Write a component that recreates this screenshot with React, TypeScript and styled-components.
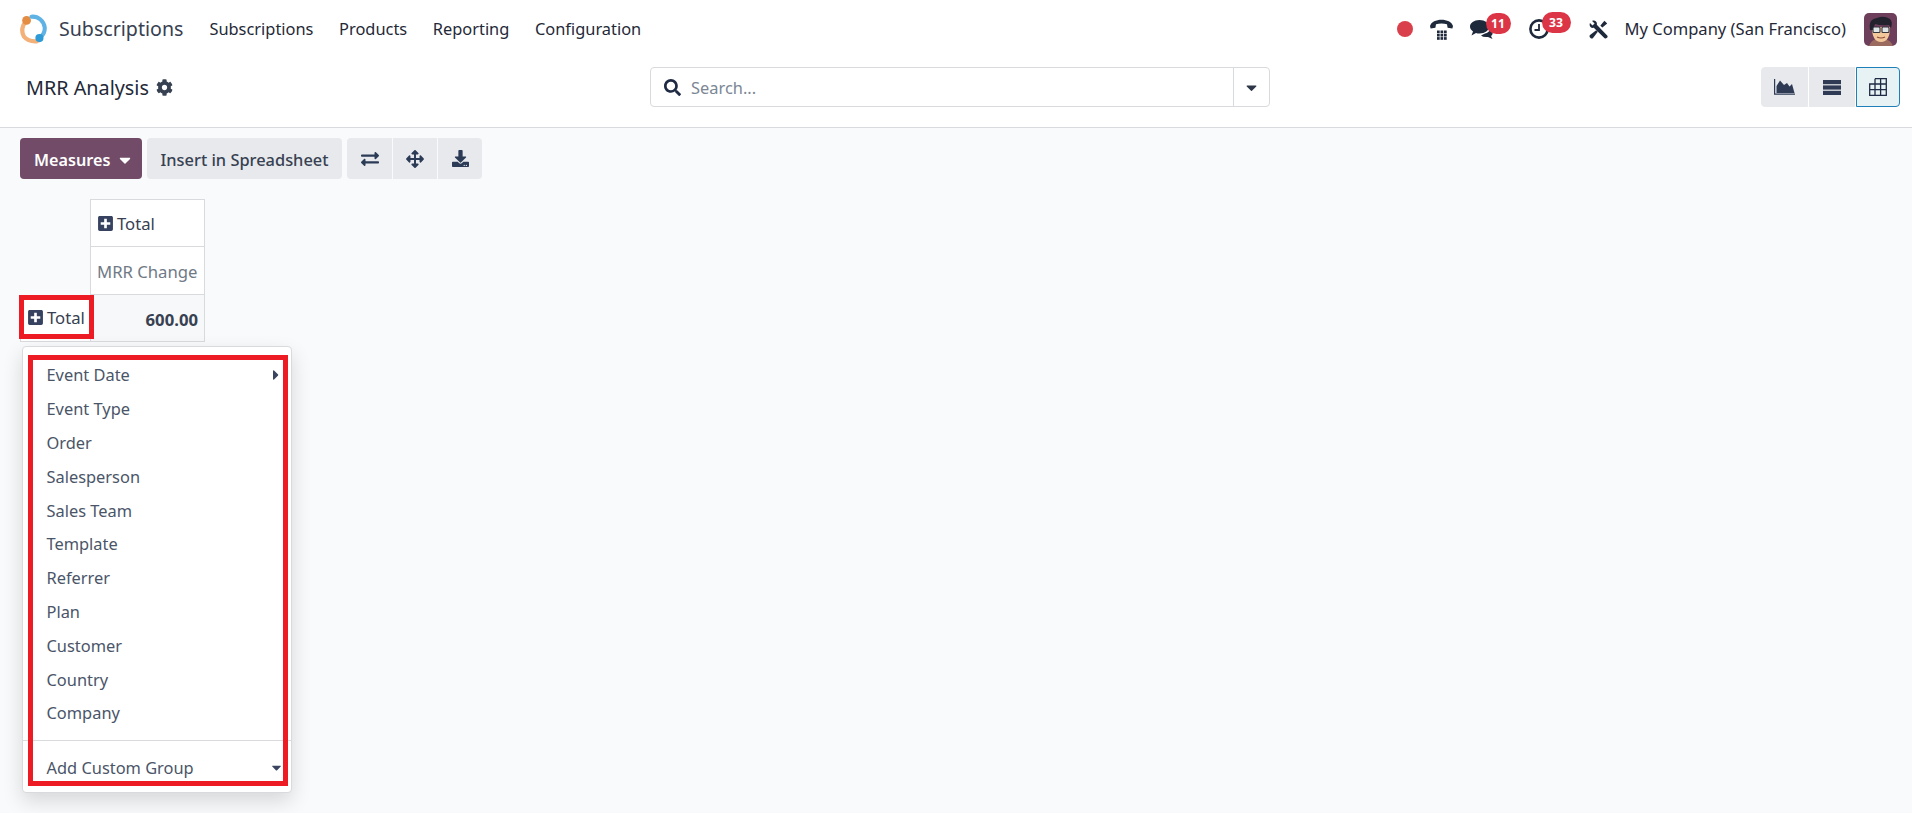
import React from "react";
import styled, { createGlobalStyle } from "styled-components";
import {
  FaCog, FaSearch, FaCaretDown, FaCaretRight, FaExchangeAlt, FaArrowsAlt, FaDownload,
  FaPlusSquare,
} from "react-icons/fa";

const Global = createGlobalStyle`
  html, body { margin: 0; padding: 0; background: #f9fafb; }
  body { font-family: "Noto Sans", "Open Sans", sans-serif; color: #374151; font-size: 16.4px; }
  * { box-sizing: border-box; }
`;

const Page = styled.div`
  position: relative;
  height: 813px;
  overflow: hidden;
  background: #f9fafb;
`;

const NavBar = styled.header`
  display: flex;
  align-items: center;
  height: 58px;
  background: #fff;
  padding: 0 15px 0 18px;
`;

const Brand = styled.span`
  font-size: 19.6px;
  color: #374151;
  margin-left: 11px;
  margin-right: 26px;
  padding-bottom: 1px;
`;

const MenuItem = styled.span`
  font-size: 16.4px;
  color: #1f2937;
  margin-right: 25.6px;
  padding-bottom: 2px;
`;

const Systray = styled.div`
  margin-left: auto;
  display: flex;
  align-items: center;
  color: #1e293b;
`;

const TrayIcon = styled.span<{ $w: number; $mr: number }>`
  position: relative;
  display: flex;
  align-items: center;
  justify-content: flex-start;
  width: ${(p) => p.$w}px;
  margin-right: ${(p) => p.$mr}px;
`;

const RecordDot = styled.span`
  display: block;
  width: 16px;
  height: 16px;
  border-radius: 50%;
  background: #d9404c;
`;

const Badge = styled.span<{ $left: number; $w: number }>`
  position: absolute;
  left: ${(p) => p.$left}px;
  top: -7px;
  width: ${(p) => p.$w}px;
  height: 21px;
  border-radius: 11px;
  background: #dc3545;
  color: #fff;
  font-size: 12.2px;
  font-weight: 700;
  line-height: 21px;
  text-align: center;
`;

const CompanyName = styled.span`
  font-size: 16.55px;
  color: #1f2937;
  margin-right: 18px;
  padding-bottom: 2px;
`;

const ControlPanel = styled.section`
  display: grid;
  grid-template-columns: 624px 620px 1fr;
  align-items: center;
  height: 70px;
  padding: 0 12px 11px 26px;
  background: #fff;
  border-bottom: 1px solid #d8dadd;
`;

const Title = styled.div`
  display: flex;
  align-items: center;
  gap: 7px;
  font-size: 19.8px;
  color: #1f2937;
  svg { color: #374151; }
`;

const SearchBox = styled.div`
  display: flex;
  align-items: stretch;
  height: 40px;
  background: #fff;
  border: 1px solid #d8dadd;
  border-radius: 4px;
`;

const SearchField = styled.div`
  flex: 1;
  display: flex;
  align-items: center;
  gap: 10px;
  padding-left: 13px;
  font-size: 16.4px;
  color: #7b8794;
  svg { color: #1f2a44; }
`;

const SearchCaret = styled.div`
  width: 36px;
  display: flex;
  align-items: center;
  justify-content: center;
  border-left: 1px solid #d8dadd;
  color: #2d3748;
`;

const Switcher = styled.div`
  display: flex;
  justify-content: flex-end;
  gap: 1px;
`;

const ViewButton = styled.button<{ $active?: boolean; $w: number; $pos: "first" | "mid" | "last" }>`
  display: flex;
  align-items: center;
  justify-content: center;
  width: ${(p) => p.$w}px;
  height: 40px;
  padding: 0;
  border: 1px solid ${(p) => (p.$active ? "#1f7fb8" : "#e7e9ed")};
  background: ${(p) => (p.$active ? "#e6f2f3" : "#e7e9ed")};
  color: #2f3b55;
  border-radius: ${(p) => (p.$pos === "first" ? "4px 0 0 4px" : p.$pos === "last" ? "0 4px 4px 0" : "0")};
`;

const Content = styled.main`
  padding: 10px 20px 0;
`;

const Toolbar = styled.div`
  display: flex;
  align-items: stretch;
  height: 41px;
`;

const MeasuresButton = styled.button`
  display: flex;
  align-items: center;
  gap: 6px;
  width: 122px;
  padding: 2px 0 0 14px;
  border: 0;
  border-radius: 4px;
  background: #714b67;
  color: #fff;
  font: 600 16.2px "Noto Sans", sans-serif;
  margin-right: 5px;
`;

const GreyButton = styled.button`
  width: 195px;
  border: 0;
  border-radius: 4px;
  background: #e7e9ed;
  color: #374151;
  font: 500 16.4px "Noto Sans", sans-serif;
  padding: 2px 0 0;
  margin-right: 5px;
`;

const IconButton = styled.button<{ $w: number; $pos: "first" | "mid" | "last" }>`
  display: flex;
  align-items: center;
  justify-content: center;
  width: ${(p) => p.$w}px;
  border: 0;
  padding: 0;
  margin-right: ${(p) => (p.$pos === "last" ? 0 : 1)}px;
  background: #e7e9ed;
  color: #2b3a55;
  border-radius: ${(p) => (p.$pos === "first" ? "4px 0 0 4px" : p.$pos === "last" ? "0 4px 4px 0" : "0")};
`;

const Pivot = styled.table`
  border-collapse: collapse;
  margin-top: 20px;
  font-size: 16.7px;
  color: #374151;
`;

const BlankCell = styled.th`
  width: 70px;
  padding: 0;
`;

const HeadCell = styled.th<{ $muted?: boolean; $h: number }>`
  width: 114px;
  height: ${(p) => p.$h}px;
  padding: 2px 6px 0;
  background: #fff;
  border: 1px solid #d8dadd;
  font-weight: 400;
  text-align: left;
  white-space: nowrap;
  color: ${(p) => (p.$muted ? "#6f7a86" : "#374151")};
`;

const ToggleLabel = styled.span`
  display: inline-flex;
  align-items: center;
  gap: 3px;
  svg { color: #374260; }
`;

const RowHead = styled.th`
  position: relative;
  height: 47px;
  padding: 2px 0 0 6px;
  background: #fff;
  border: 1px solid #d8dadd;
  border-top: 0;
  font-weight: 400;
  text-align: left;
`;

const ValueCell = styled.td`
  padding: 2px 6px 0;
  text-align: right;
  font-weight: 700;
  background: #f7f8f9;
  border: 1px solid #d8dadd;
`;

const RedFrame = styled.span<{ $t: number; $r: number; $b: number; $l: number }>`
  position: absolute;
  top: ${(p) => p.$t}px;
  right: ${(p) => p.$r}px;
  bottom: ${(p) => p.$b}px;
  left: ${(p) => p.$l}px;
  border: 5px solid #ed1c24;
  pointer-events: none;
`;

const Menu = styled.div`
  position: absolute;
  left: 22px;
  top: 346px;
  width: 270px;
  height: 447px;
  padding-top: 11px;
  background: #fff;
  border: 1px solid #d8dadd;
  border-radius: 4px;
  box-shadow: 0 8px 20px rgba(0, 0, 0, 0.14);
`;

const MenuRow = styled.div`
  position: relative;
  display: flex;
  align-items: center;
  height: 33.8px;
  padding-left: 23.5px;
  font-size: 16.4px;
  color: #4a5568;
  svg { position: absolute; right: 7px; color: #3a4560; }
`;

const MenuDivider = styled.hr`
  margin: 10px 0;
  border: 0;
  border-top: 1px solid #d8dadd;
`;

const Logo = () => (
  <svg width="30" height="30" viewBox="2 1 27 28" fill="none">
    <path d="M9 8 A11.5 11.5 0 0 0 7 22 Q11 27 19 26.5" stroke="#f3b078" strokeWidth="4" strokeLinecap="round" />
    <circle cx="9.5" cy="7" r="4.1" fill="#e48c42" />
    <path d="M14 3.5 A11.5 11.5 0 0 1 26.5 14 Q26.5 19 23 22" stroke="#5fb2e4" strokeWidth="3.8" strokeLinecap="round" />
    <circle cx="21.5" cy="23.5" r="3.8" fill="#2f9bd6" />
  </svg>
);

const PhoneIcon = () => (
  <svg width="23" height="21" viewBox="0 0 23 21" fill="#1e293b">
    <path d="M0 7 C2 -1.5 21 -1.5 23 7 L22.4 9.4 L17.6 8.8 L17 5.2 C13.5 4.2 9.5 4.2 6 5.2 L5.4 8.8 L.6 9.4 Z" />
    {[7, 10.5, 14].map((x) => [11.5, 14.8, 18.1].map((y) => <rect key={`${x}${y}`} x={x} y={y} width="2.7" height="2.7" />))}
  </svg>
);

const ChatIcon = () => (
  <svg width="23" height="19" viewBox="0 0 23 19" fill="#1e293b">
    <path d="M15 13.5 Q19 12.5 20 9.5 Q23 11 22.6 13.5 Q22.4 15 21 16 L22.5 19 L18 17 Q13 17.5 11 15.5 Z" />
    <path d="M9.5 0 C15 0 19 3 19 6.5 C19 10.5 15 13.5 9.5 13.5 Q7.5 13.5 6 13 L1.5 15.5 L3 11.5 C1 10 0 8.5 0 6.5 C0 3 4 0 9.5 0 Z" />
  </svg>
);

const ClockIcon = () => (
  <svg width="20" height="20" viewBox="0 0 20 20" fill="none" stroke="#1e293b">
    <circle cx="10" cy="10" r="8.6" strokeWidth="2.6" />
    <path d="M10 5 V11 H5.5" strokeWidth="1.8" />
  </svg>
);

const ToolsIcon = () => (
  <svg width="19" height="19" viewBox="0 0 19 19" fill="#1e293b">
    <path d="M1 3 L3.5 5.5 L5.6 3.4 L3.1 .9 C6 -.3 8.6 2 7.8 4.8 L18.2 15.6 Q19 16.4 18.3 17.4 L17.6 18.1 Q16.6 19 15.6 18.2 L4.8 7.8 C2 8.6 -.3 6 1 3 Z" />
    <path d="M12.2 6.4 L11.4 5.6 L15.4 .8 L18.2 3.6 L13.4 7.6 Z" />
    <path d="M7.2 10.2 L8.8 11.8 L4 18 Q3 19 1.8 18.2 L.8 17.2 Q0 16 1 15 Z" />
  </svg>
);

const AreaIcon = () => (
  <svg width="21" height="16" viewBox="0 0 21 16" fill="currentColor">
    <path d="M.6 0 V15.2 H21" fill="none" stroke="currentColor" strokeWidth="1.2" />
    <path d="M2.5 14 V7 L6 1.5 L10 6 L13 4 L15.5 7.5 L18 5 L20.5 14 Z" />
  </svg>
);

const ListIcon = () => (
  <svg width="18" height="15" viewBox="0 0 18 15" fill="currentColor">
    <rect x="0" y="0" width="18" height="4.2" />
    <rect x="0" y="5.4" width="18" height="4.2" />
    <rect x="0" y="10.8" width="18" height="4.2" />
  </svg>
);

const PivotIcon = () => (
  <svg width="18" height="18" viewBox="0 0 18 18" fill="none" stroke="#1f2a44" strokeWidth="1.3">
    <path d="M6 .7 H17.3 V17.3 H.7 V6 H17.3 M.7 11.6 H17.3 M6 .7 V17.3 M11.6 .7 V17.3" />
  </svg>
);

const Avatar = () => (
  <svg width="33" height="33" viewBox="0 0 33 33">
    <rect width="33" height="33" rx="5" fill="#6d3f5b" />
    <path d="M5 33 Q7 27 13 26 L20 26 Q27 27 29 33 Z" fill="#9c6b5f" />
    <path d="M8 14 Q8 29 17 29 Q26 29 26 14 Z" fill="#f2c79a" />
    <path d="M6 17 Q4 6 13 5 Q20 2 26 6 Q29 9 27 15 L25 12 Q17 13 11 11 Q10 14 9 17 Z" fill="#23232d" />
    <rect x="9" y="14" width="7" height="5.5" rx="1" fill="#dfe6e6" stroke="#33333d" strokeWidth="1.1" />
    <rect x="18" y="14" width="7" height="5.5" rx="1" fill="#dfe6e6" stroke="#33333d" strokeWidth="1.1" />
    <path d="M13 24 Q17 26 21 24" stroke="#8a4a3a" strokeWidth="1.2" fill="none" />
  </svg>
);

const groups = ["Event Date", "Event Type", "Order", "Salesperson", "Sales Team", "Template", "Referrer", "Plan", "Customer", "Country", "Company"];

export default function App() {
  return (
    <Page>
      <Global />
      <NavBar>
        <Logo />
        <Brand>Subscriptions</Brand>
        <MenuItem>Subscriptions</MenuItem>
        <MenuItem>Products</MenuItem>
        <MenuItem>Reporting</MenuItem>
        <MenuItem>Configuration</MenuItem>
        <Systray>
          <TrayIcon $w={16} $mr={17}><RecordDot /></TrayIcon>
          <TrayIcon $w={23} $mr={17}><PhoneIcon /></TrayIcon>
          <TrayIcon $w={23} $mr={36}>
            <ChatIcon />
            <Badge $left={16} $w={25}>11</Badge>
          </TrayIcon>
          <TrayIcon $w={20} $mr={40}>
            <ClockIcon />
            <Badge $left={13} $w={29}>33</Badge>
          </TrayIcon>
          <TrayIcon $w={19} $mr={17}><ToolsIcon /></TrayIcon>
          <CompanyName>My Company (San Francisco)</CompanyName>
          <Avatar />
        </Systray>
      </NavBar>
      <ControlPanel>
        <Title>MRR Analysis <FaCog size={17} /></Title>
        <SearchBox>
          <SearchField><FaSearch size={17} />Search...</SearchField>
          <SearchCaret><FaCaretDown size={17} /></SearchCaret>
        </SearchBox>
        <Switcher>
          <ViewButton $w={47} $pos="first"><AreaIcon /></ViewButton>
          <ViewButton $w={46} $pos="mid"><ListIcon /></ViewButton>
          <ViewButton $w={44} $pos="last" $active><PivotIcon /></ViewButton>
        </Switcher>
      </ControlPanel>
      <Content>
        <Toolbar>
          <MeasuresButton>Measures <FaCaretDown size={18} /></MeasuresButton>
          <GreyButton>Insert in Spreadsheet</GreyButton>
          <IconButton $w={45} $pos="first"><FaExchangeAlt size={18} /></IconButton>
          <IconButton $w={44} $pos="mid"><FaArrowsAlt size={18} /></IconButton>
          <IconButton $w={44} $pos="last"><FaDownload size={17} /></IconButton>
        </Toolbar>
        <Pivot>
          <tbody>
            <tr>
              <BlankCell rowSpan={2} />
              <HeadCell $h={47}><ToggleLabel><FaPlusSquare size={17} />Total</ToggleLabel></HeadCell>
            </tr>
            <tr>
              <HeadCell $h={48} $muted>MRR Change</HeadCell>
            </tr>
            <tr>
              <RowHead>
                <ToggleLabel><FaPlusSquare size={17} />Total</ToggleLabel>
                <RedFrame $t={0} $r={-4} $b={2} $l={-2} />
              </RowHead>
              <ValueCell>600.00</ValueCell>
            </tr>
          </tbody>
        </Pivot>
      </Content>
      <Menu>
        {groups.map((g, i) => (
          <MenuRow key={g}>{g}{i === 0 && <FaCaretRight size={16} />}</MenuRow>
        ))}
        <MenuDivider />
        <MenuRow>Add Custom Group<FaCaretDown size={15} /></MenuRow>
        <RedFrame $t={8} $r={3} $b={6} $l={5} />
      </Menu>
    </Page>
  );
}
